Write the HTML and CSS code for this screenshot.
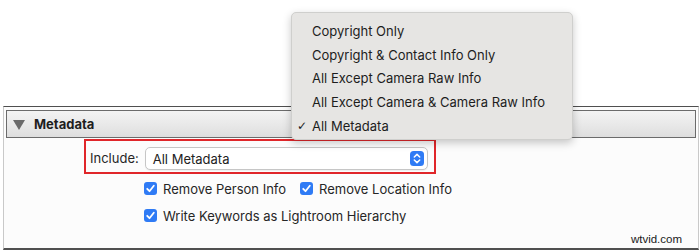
FILE: index.html
```html
<!DOCTYPE html>
<html>
<head>
<meta charset="utf-8">
<link rel="stylesheet" href="styles.css">
</head>
<body>
<div class="page">
  <div class="panel">
    <div class="header">
      <svg class="tri" width="12" height="10" viewBox="0 0 12 10"><polygon points="0,0 12,0 6,10" fill="#6a6a6a"/></svg>
      <span class="title">Metadata</span>
    </div>
    <div class="body">
      <div class="include">
        <span class="label">Include:</span>
        <div class="select">
          <span>All Metadata</span>
          <svg class="stepper" width="14" height="15" viewBox="0 0 14 15"><rect x="0" y="0" width="14" height="15" rx="3.5" fill="#2f7bf5"/><path d="M4.3 6 L7 3.4 L9.7 6 M4.3 9 L7 11.6 L9.7 9" fill="none" stroke="#fff" stroke-width="1.5" stroke-linecap="round" stroke-linejoin="round"/></svg>
        </div>
      </div>
      <div class="row first">
        <label class="check"><span class="box"><svg width="13" height="13" viewBox="0 0 13 13"><path d="M3.2 6.8 L5.5 9.2 L9.8 3.8" fill="none" stroke="#fff" stroke-width="1.8" stroke-linecap="round" stroke-linejoin="round"/></svg></span>Remove Person Info</label>
        <label class="check"><span class="box"><svg width="13" height="13" viewBox="0 0 13 13"><path d="M3.2 6.8 L5.5 9.2 L9.8 3.8" fill="none" stroke="#fff" stroke-width="1.8" stroke-linecap="round" stroke-linejoin="round"/></svg></span>Remove Location Info</label>
      </div>
      <div class="row">
        <label class="check"><span class="box"><svg width="13" height="13" viewBox="0 0 13 13"><path d="M3.2 6.8 L5.5 9.2 L9.8 3.8" fill="none" stroke="#fff" stroke-width="1.8" stroke-linecap="round" stroke-linejoin="round"/></svg></span>Write Keywords as Lightroom Hierarchy</label>
      </div>
      <div class="watermark">wtvid.com</div>
    </div>
  </div>
  <div class="menu">
    <div class="item">Copyright Only</div>
    <div class="item">Copyright &amp; Contact Info Only</div>
    <div class="item">All Except Camera Raw Info</div>
    <div class="item">All Except Camera &amp; Camera Raw Info</div>
    <div class="item checked"><span class="tick">✓</span>All Metadata</div>
  </div>
</div>
</body>
</html>
```
FILE: styles.css
```css
* { box-sizing: border-box; }
html, body { margin: 0; padding: 0; background: #fff; }
body {
  width: 700px;
  height: 251px;
  overflow: hidden;
  font-family: Inter, "Liberation Sans", Arial, sans-serif;
  font-size: 13px;
  color: #222;
}
.page {
  position: relative;
  width: 700px;
  height: 251px;
  padding-top: 106px;
}
.panel {
  margin-left: 3px;
  width: 696px;
  height: 144px;
  border-top: 1px solid #4f4f4f;
  border-left: 1px solid #c9c9c9;
  border-right: 1px solid #c9c9c9;
  border-bottom: 2px solid #505050;
  background: #fcfcfc;
  display: flex;
  flex-direction: column;
}
.header {
  margin: 3px 2px 0 2px;
  height: 28px;
  border: 1px solid #6b6b6b;
  background: linear-gradient(#f3f3f3, #e9e9e9 50%, #dedede);
  display: flex;
  align-items: center;
  padding-left: 6px;
}
.tri { margin-right: 9px; margin-top: 1px; }
.title { font-weight: 700; font-size: 13px; color: #1e1e1e; }
.body {
  position: relative;
  flex: 1;
  display: flex;
  flex-direction: column;
}
.include {
  margin: 1px 0 0 80px;
  width: 352px;
  height: 35px;
  border: 2px solid #e0262a;
  display: flex;
  align-items: flex-start;
  padding: 6px 6px 0 4px;
  gap: 6px;
}
.label { line-height: 23px; color: #262626; }
.select {
  flex: 1;
  height: 23px;
  background: #fff;
  border: 1px solid #c6c6c6;
  border-radius: 5px;
  box-shadow: 0 1px 1px rgba(0,0,0,0.06);
  display: flex;
  align-items: center;
  justify-content: space-between;
  padding: 0 3px 0 7px;
  color: #222;
}
.stepper { display: block; }
.row {
  display: flex;
  gap: 14px;
  margin-left: 140px;
  height: 27px;
  align-items: center;
}
.row.first { margin-top: 1px; }
.check {
  display: flex;
  align-items: center;
  gap: 6px;
  color: #262626;
}
.box {
  width: 13px;
  height: 13px;
  border-radius: 3px;
  background: #2f7bf5;
  display: block;
}
.box svg { display: block; }
.watermark {
  position: absolute;
  right: 16px;
  bottom: 3px;
  font-family: "Liberation Sans", Arial, sans-serif;
  font-size: 11.5px;
  color: #1a1a1a;
}
.menu {
  position: absolute;
  left: 291px;
  top: 12px;
  width: 282px;
  height: 128px;
  background: #e6e5e3;
  border: 1px solid #cfcfcd;
  border-radius: 5px;
  box-shadow: 0 3px 8px rgba(0,0,0,0.22);
  padding-top: 7px;
}
.item {
  height: 23.7px;
  line-height: 23.7px;
  padding-left: 20px;
  color: #1d1d1d;
  position: relative;
  white-space: nowrap;
}
.tick {
  position: absolute;
  left: 5px;
  top: 0;
  font-family: "DejaVu Sans", sans-serif;
  font-weight: 700;
  font-size: 12px;
}
```
